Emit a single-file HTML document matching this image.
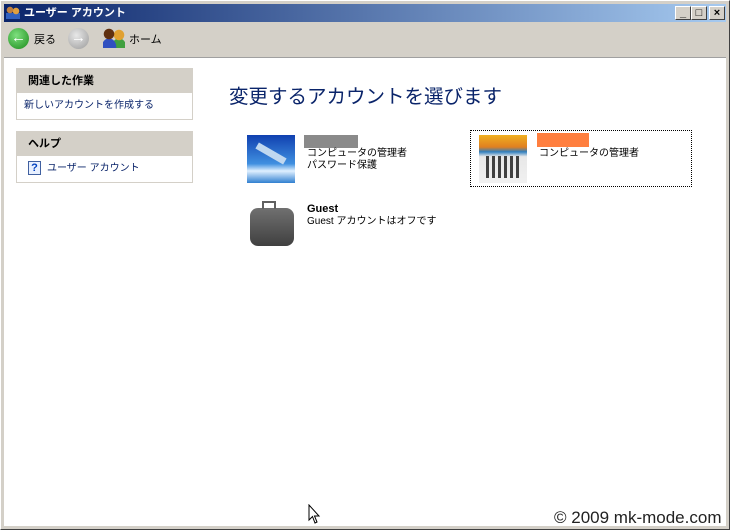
<!DOCTYPE html>
<html><head><meta charset="utf-8"><style>
*{margin:0;padding:0;box-sizing:border-box}
body{width:730px;height:530px;background:#d4d0c8;font-family:"Liberation Sans","Noto Sans CJK JP",sans-serif;font-size:11px;position:relative;overflow:hidden}
.abs{position:absolute}
#frame{left:0;top:0;width:730px;height:530px;border:1px solid #fff;border-right-color:#404040;border-bottom-color:#404040}
#title{left:4px;top:4px;width:722px;height:18px;background:linear-gradient(to right,#0a246a,#a6caf0);color:#fff;font-weight:bold;font-size:11px;line-height:18px;padding-left:20px}
.btn{top:6px;width:16px;height:14px;background:#d4d0c8;border:1px solid #fff;border-right-color:#404040;border-bottom-color:#404040;font-size:11px;text-align:center;line-height:12px;color:#000;font-weight:bold}
#content{left:4px;top:57px;width:722px;height:469px;background:#fff;border-top:1px solid #a0a0a0}
.box{left:16px;width:177px;border:1px solid #d4d0c8;background:#fff}
.box .h{background:#d4d0c8;height:24px;line-height:24px;padding-left:11px;font-weight:bold;font-size:11px}
.box .b{height:26px;line-height:26px;padding-left:7px;color:#0a246a;font-size:10px}
.t{font-size:10px;line-height:12px;color:#000}
</style></head><body>
<div id="frame" class="abs"></div>
<div id="title" class="abs">ユーザー アカウント</div>
<div class="abs" style="left:6px;top:6px;width:14px;height:13px;background:radial-gradient(circle at 4px 4px,#c08040 3px,transparent 3.5px),radial-gradient(circle at 10px 5px,#e0a040 3px,transparent 3.5px),linear-gradient(transparent 7px,#3060c0 7px)"></div>
<div class="btn abs" style="left:675px">_</div>
<div class="btn abs" style="left:691px">□</div>
<div class="btn abs" style="left:709px;width:16px">×</div>
<div class="abs" style="left:8px;top:28px;width:21px;height:21px;border-radius:50%;background:radial-gradient(circle at 40% 35%,#7ee07e,#1a8a1a);color:#fff;font-weight:bold;text-align:center;line-height:20px;font-size:15px">←</div>
<div class="abs" style="left:34px;top:31px;font-size:11px">戻る</div>
<div class="abs" style="left:68px;top:28px;width:21px;height:21px;border-radius:50%;background:radial-gradient(circle at 40% 35%,#e8e8e8,#9a9a9a);color:#fff;font-weight:bold;text-align:center;line-height:20px;font-size:15px">→</div>
<div class="abs" style="left:103px;top:28px;width:22px;height:20px;background:radial-gradient(circle at 6px 6px,#603010 5px,transparent 5.5px),radial-gradient(circle at 16px 7px,#e0a030 5px,transparent 5.5px),radial-gradient(ellipse at 6px 19px,#3050c0 7px,transparent 7.5px),radial-gradient(ellipse at 16px 19px,#40a040 7px,transparent 7.5px)"></div>
<div class="abs" style="left:129px;top:31px;font-size:11px">ホーム</div>
<div id="content" class="abs"></div>
<div class="box abs" style="top:68px"><div class="h">関連した作業</div><div class="b">新しいアカウントを作成する</div></div>
<div class="box abs" style="top:131px"><div class="h">ヘルプ</div><div class="b"><span style="display:inline-block;width:13px;height:14px;border:1px solid #4060a0;background:#e8f0ff;color:#0040c0;font-weight:bold;font-size:11px;line-height:12px;text-align:center;vertical-align:middle;margin-right:6px;margin-left:4px">?</span>ユーザー アカウント</div></div>
<div class="abs" style="left:229px;top:80px;font-size:19.5px;color:#0a246a">変更するアカウントを選びます</div>
<div class="abs" style="left:247px;top:135px;width:48px;height:48px;background:linear-gradient(#1040b0,#4090e0 60%,#e0f0ff 75%,#3080d0)"></div>
<div class="abs" style="left:255px;top:150px;width:32px;height:7px;background:#c0d8f0;transform:rotate(30deg)"></div>
<div class="abs" style="left:304px;top:135px;width:54px;height:13px;background:#8a8a8a"></div>
<div class="abs t" style="left:307px;top:148px">コンピュータの管理者<br>パスワード保護</div>
<div class="abs" style="left:470px;top:130px;width:222px;height:57px;border:1px dotted #000"></div>
<div class="abs" style="left:479px;top:135px;width:48px;height:48px;background:linear-gradient(#f0b020,#e08020 25%,#3080c0 35%,#e8e8e8 45%,#f0f0f0)"></div>
<div class="abs" style="left:486px;top:156px;width:34px;height:22px;background:repeating-linear-gradient(90deg,#404040 0 3px,transparent 3px 6px)"></div>
<div class="abs" style="left:537px;top:133px;width:52px;height:14px;background:#ff7f3f"></div>
<div class="abs t" style="left:539px;top:148px">コンピュータの管理者</div>
<div class="abs" style="left:250px;top:208px;width:44px;height:38px;border-radius:8px;background:linear-gradient(#707070,#404040)"></div>
<div class="abs" style="left:262px;top:201px;width:14px;height:8px;border:2px solid #606060;border-bottom:none"></div>
<div class="abs t" style="left:307px;top:203px;font-weight:bold;font-size:11px">Guest</div>
<div class="abs t" style="left:307px;top:216px">Guest アカウントはオフです</div>
<div class="abs" style="left:554px;top:508px;font-size:17px;color:#222">© 2009 mk-mode.com</div>
<svg class="abs" style="left:308px;top:504px" width="13" height="21"><path d="M1 1 L1 16 L4.5 12.5 L7 19 L9 18 L6.5 12 L11 12 Z" fill="#fff" stroke="#000"/></svg>
</body></html>
